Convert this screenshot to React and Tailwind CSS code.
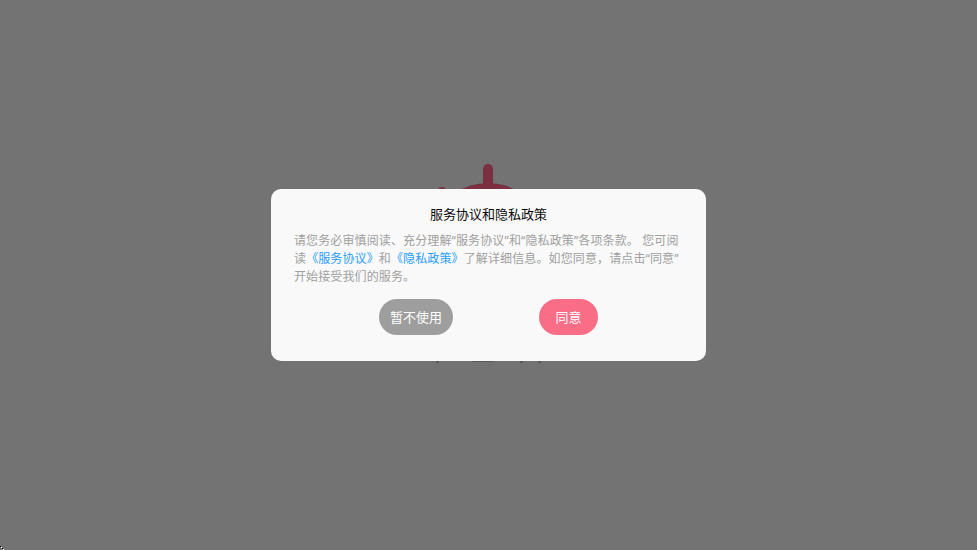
import React from "react";

const App = () => {
  return (
    <div className="relative flex h-[550px] w-full items-center justify-center overflow-hidden bg-[#737373] bg-[repeating-conic-gradient(#707070_0_25%,#767676_0_50%)] bg-[length:2px_2px] font-['Noto_Sans','Noto_Sans_CJK_SC',sans-serif]">
      {/* logo behind the dimmed layer */}
      <svg className="absolute left-[420px] top-[155px] h-[220px] w-[140px]" viewBox="0 0 140 220">
        <rect x="63" y="9" width="10" height="40" rx="5" fill="#7a3040" />
        <ellipse cx="68" cy="62" rx="46" ry="34" fill="#7a3040" />
        <circle cx="22" cy="36" r="4" fill="#7a3040" />
        <rect x="16" y="206" width="3" height="2" fill="#5a5a5a" />
        <rect x="52" y="205" width="22" height="2" fill="#5a5a5a" />
        <rect x="100" y="206" width="3" height="2" fill="#5a5a5a" />
        <rect x="118" y="206" width="3" height="2" fill="#5a5a5a" />
      </svg>

      {/* stray pixels in the bottom left corner */}
      <svg className="absolute bottom-0 left-0 h-[4px] w-[4px]" viewBox="0 0 4 4">
        <rect x="0" y="0" width="1" height="1" fill="#000000" />
        <rect x="1" y="1" width="1" height="1" fill="#ffffff" />
        <rect x="2" y="2" width="1" height="1" fill="#000000" />
        <rect x="3" y="3" width="1" height="1" fill="#ffffff" />
      </svg>

      <div className="relative flex h-[172px] w-[435px] flex-col rounded-[10px] bg-[#f9f9f9] px-[23px] pt-[16px]">
        <h2 className="text-center text-[13px] leading-[18px] font-normal text-[#0a0a0a]">
          服务协议和隐私政策
        </h2>
        <p className="mt-[9px] text-[12px] leading-[18px] tracking-[0.12px] text-[#a0a0a0]">
          请您务必审慎阅读、充分理解“服务协议”和“隐私政策”各项条款。 您可阅读
          <span className="text-[#2b9dff]">《服务协议》</span>和
          <span className="text-[#2b9dff]">《隐私政策》</span>
          了解详细信息。如您同意，请点击“同意”
          <br />
          开始接受我们的服务。
        </p>
        <div className="mt-[13px] flex justify-center gap-[86px]">
          <button className="h-[36px] w-[74px] rounded-full bg-[#9e9e9e] pt-[2px] text-[13px] text-white">
            暂不使用
          </button>
          <button className="h-[36px] w-[59px] rounded-full bg-[#f96d87] pt-[2px] text-[13px] text-white">
            同意
          </button>
        </div>
      </div>
    </div>
  );
};

export default App;
